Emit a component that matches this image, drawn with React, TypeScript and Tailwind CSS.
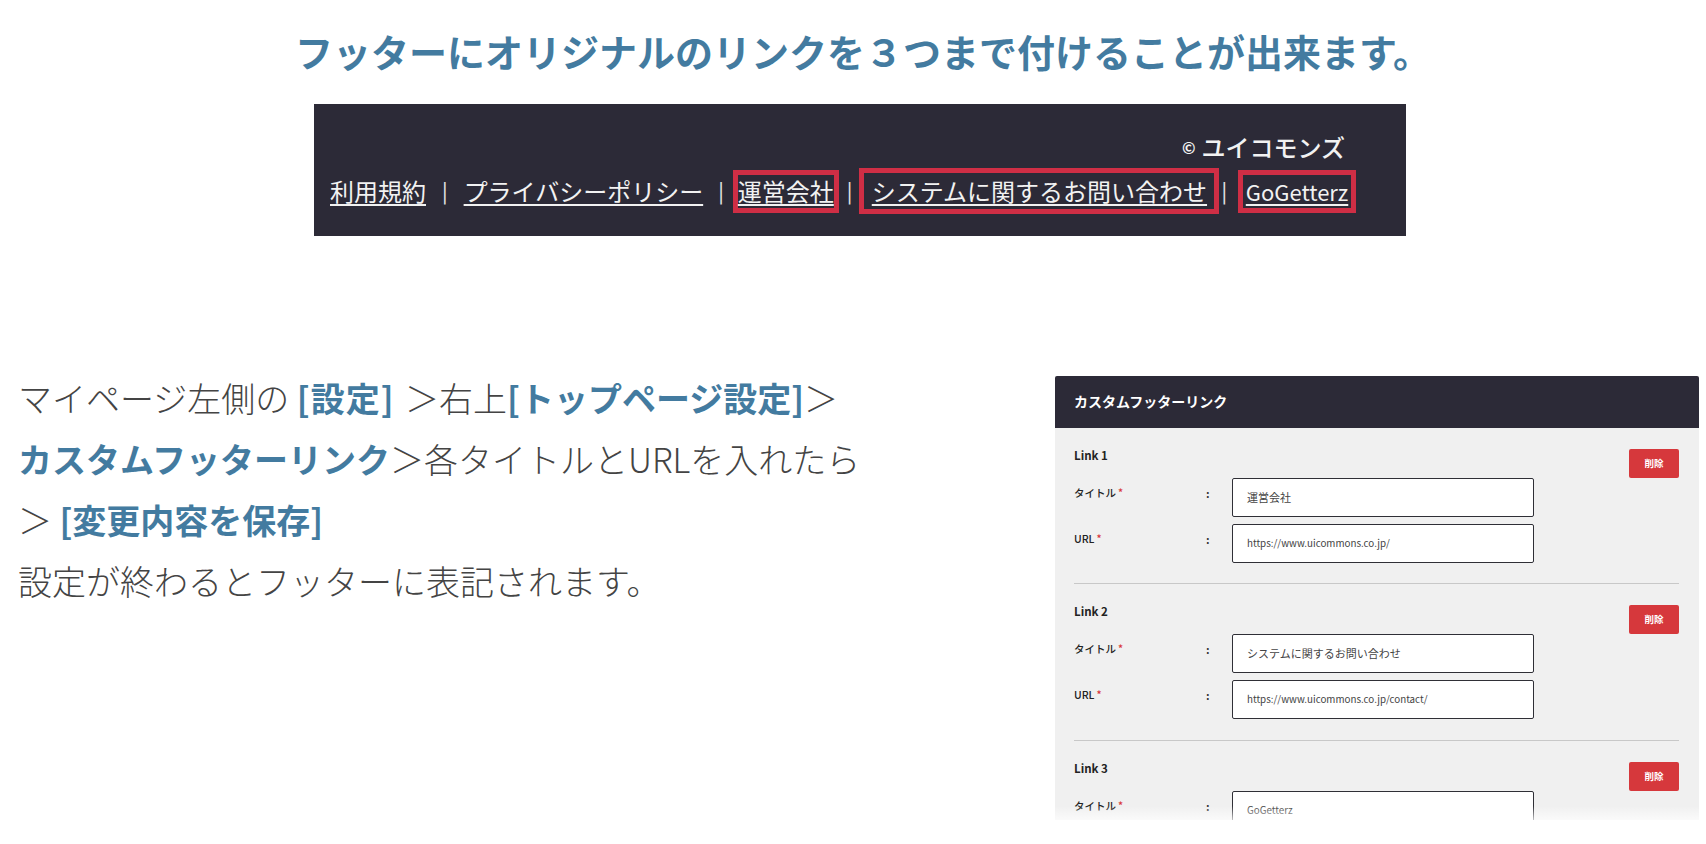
const JP = "font-['Noto_Sans_CJK_JP','Noto_Sans',sans-serif]";

const LINKS = [
  { name: "Link 1", title: "運営会社", url: "https://www.uicommons.co.jp/" },
  { name: "Link 2", title: "システムに関するお問い合わせ", url: "https://www.uicommons.co.jp/contact/" },
  { name: "Link 3", title: "GoGetterz", url: "" },
];

function Field({ label, value }: { label: string; value: string }) {
  const latin = /^[\x00-\x7f]+$/.test(value);
  return (
    <div className="flex items-start">
      <div className="flex h-[30px] w-[132px] items-center text-[10.5px] font-medium text-[#222]">
        {label}
        <span className="ml-[2px] text-[#d9383a]">*</span>
      </div>
      <div className="flex h-[30px] w-[26px] items-center text-[11px] font-bold text-[#333]">:</div>
      <div
        className={`flex h-[39px] w-[302px] items-center rounded-[2px] border-[1.5px] border-[#2f2f36] bg-white pl-[14px] text-[#444] ${
          latin ? "text-[9.8px]" : "text-[11px]"
        }`}
      >
        {value}
      </div>
    </div>
  );
}

function LinkBlock({ name, title, url, index }: { name: string; title: string; url: string; index: number }) {
  let spacing = "border-b border-[#c8c8c8] pb-[20px] pt-[21px]";
  if (index === 1) spacing = "border-b border-[#c8c8c8] pb-[21px] pt-[21px]";
  if (index === 2) spacing = "pt-[21px]";

  return (
    <div className={spacing}>
      <div className="flex h-[29px] items-start justify-between">
        <span className="-mt-[1px] text-[11.5px] leading-[14px] font-bold text-[#222]">{name}</span>
        <button className="flex h-[29px] w-[50px] items-center justify-center rounded-[2px] bg-[#d6383c] text-[9.5px] font-bold text-white">
          削除
        </button>
      </div>
      <div className="flex flex-col gap-[7px]">
        <Field label="タイトル" value={title} />
        {url && <Field label="URL" value={url} />}
      </div>
    </div>
  );
}

function BoxedLink({ children, className }: { children: string; className: string }) {
  return (
    <span className={`flex h-[43px] items-center justify-center whitespace-nowrap border-[5px] border-[#cf2e45] ${className}`}>
      <span className="underline underline-offset-[3px]">{children}</span>
    </span>
  );
}

function Sep({ className }: { className: string }) {
  return <span className={`text-[20px] font-medium text-[#ddd] ${className}`}>|</span>;
}

export default function App() {
  return (
    <div className={`h-[844px] w-[1706px] overflow-hidden bg-white ${JP}`}>
      <h1 className="flex h-[104px] items-start justify-center pl-[20px] pt-[26px] text-[38px] leading-[50px] font-bold whitespace-nowrap text-[#437ba0]">
        フッターにオリジナルのリンクを３つまで付けることが出来ます。
      </h1>

      <div className="ml-[314px] h-[132px] w-[1092px] bg-[#2c2a37] text-[24px] text-[#f2f2f2]">
        <div className="flex h-[60px] items-end justify-end pr-[61px] leading-[34px] font-medium">
          <span className="mr-[6px] text-[16px] font-bold">©</span>ユイコモンズ
        </div>
        <div className="mt-[4px] flex items-center pl-[16px] leading-[34px]">
          <span className="underline underline-offset-[3px]">利用規約</span>
          <Sep className="mx-[16px]" />
          <span className="underline underline-offset-[3px]">プライバシーポリシー</span>
          <Sep className="ml-[15px] mr-[9px]" />
          <BoxedLink className="w-[106px]">運営会社</BoxedLink>
          <Sep className="ml-[8px] mr-[7px]" />
          <BoxedLink className="!h-[46px] w-[360px]">システムに関するお問い合わせ</BoxedLink>
          <Sep className="ml-[2px] mr-[11px]" />
          <BoxedLink className="w-[118px] text-[22px]">GoGetterz</BoxedLink>
        </div>
      </div>

      <div className="mt-[131px] flex items-start">
        <div className="w-[1055px] pl-[18px] text-[34px] leading-[61px] font-light text-[#444]">
          <p>
            マイページ左側の <b className="mr-[3px] font-bold tracking-[1px] text-[#437ba0]">[設定]</b> ＞右上
            <b className="font-bold text-[#437ba0]">[トップページ設定]</b>＞
          </p>
          <p>
            <b className="font-bold text-[#437ba0]">カスタムフッターリンク</b>＞各タイトルとURLを入れたら
          </p>
          <p>
            ＞ <b className="font-bold text-[#437ba0]">[変更内容を保存]</b>
          </p>
          <p>設定が終わるとフッターに表記されます。</p>
        </div>

        <div className="relative mt-[9px] h-[444px] w-[644px] overflow-hidden rounded-t-[2px] bg-[#f0f0f0]">
          <div className="flex h-[52px] items-center bg-[#2c2a37] pb-[1px] pl-[19px] text-[14px] font-bold text-white">
            カスタムフッターリンク
          </div>
          <div className="pl-[19px] pr-[20px]">
            {LINKS.map((link, i) => (
              <LinkBlock key={link.name} {...link} index={i} />
            ))}
          </div>
          <div className="absolute inset-x-0 bottom-0 h-[14px] bg-gradient-to-b from-transparent to-white/70" />
        </div>
      </div>
    </div>
  );
}
